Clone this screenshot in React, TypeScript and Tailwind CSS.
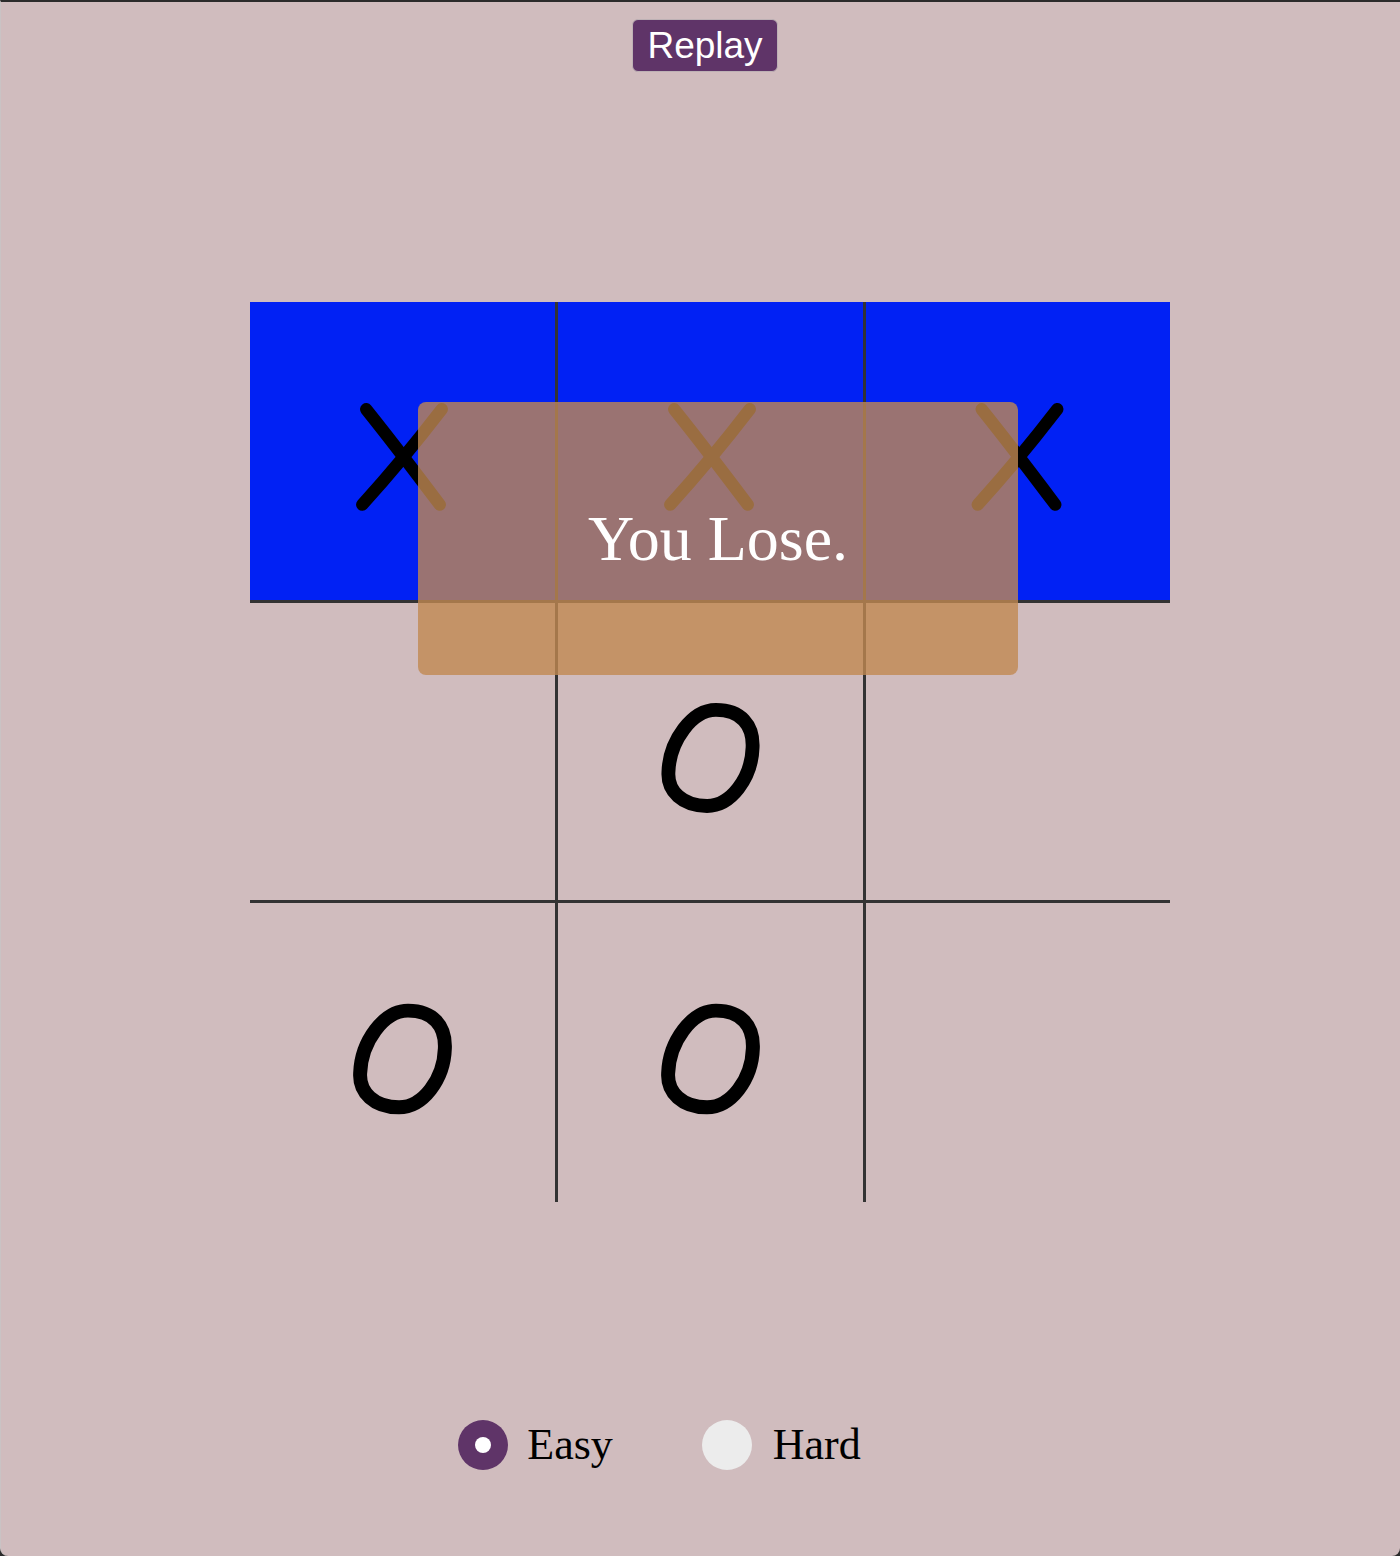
import React from "react";

type Mark = "X" | "O" | null;

const board: Mark[] = ["X", "X", "X", null, "O", null, "O", "O", null];

function XMark() {
  return (
    <svg className="absolute inset-0" width="100%" height="100%" viewBox="0 0 305 300">
      <path d="M 116 108 Q 148 148 190 204" fill="none" stroke="#000" strokeWidth="12.5" strokeLinecap="round" />
      <path d="M 192 108 Q 152 160 112 204" fill="none" stroke="#000" strokeWidth="12.5" strokeLinecap="round" />
    </svg>
  );
}

function OMark() {
  return (
    <svg className="absolute inset-0" width="100%" height="100%" viewBox="0 0 305 300">
      <path
        d="M 158 108 C 183 108, 196 123, 195 146 C 194 177, 173 205, 149 205 C 124 205, 109 190, 110 171 C 111 139, 134 108, 158 108 Z"
        fill="none"
        stroke="#000"
        strokeWidth="14"
      />
    </svg>
  );
}

export default function App() {
  const cellClass = (i: number) => {
    const row = Math.floor(i / 3);
    const col = i % 3;
    return [
      "relative",
      row === 0 ? "bg-[#0121f4]" : "",
      row < 2 ? "border-b-[3px]" : "",
      col < 2 ? "border-r-[3px]" : "",
      "border-[#333333]",
    ].join(" ");
  };

  return (
    <div className="h-[1556px] w-full bg-[#2b2b2b]">
      <div className="flex h-full flex-col rounded-b-[8px] border-t-2 border-l border-[#2b2b2b] bg-[#d0bcbe]" style={{ borderLeftColor: "#c9c3c4" }}>
        {/* replay */}
        <div className="mt-[17px] flex justify-center pl-[9px]">
          <button className="rounded-[6px] border border-[#bdb1b5] bg-[#5f3468] px-[14px] py-[4px] font-['Liberation_Sans',Arial,sans-serif] text-[37px] leading-[43px] text-white">
            Replay
          </button>
        </div>

        {/* board */}
        <div className="mt-[230px] flex justify-center pl-[19px]">
          <div className="relative grid w-[920px] grid-cols-[308px_308px_304px] grid-rows-[301px_300px_299px]">
            {board.map((m, i) => (
              <div key={i} className={cellClass(i)}>
                {m === "X" && <XMark />}
                {m === "O" && <OMark />}
              </div>
            ))}
            <div className="absolute left-[168px] top-[100px] flex h-[273px] w-[600px] items-center justify-center rounded-[8px] bg-[rgba(193,136,81,0.8)]">
              <span className="font-['Liberation_Serif','Times_New_Roman',serif] text-[64px] text-white">You Lose.</span>
            </div>
          </div>
        </div>

        {/* difficulty */}
        <div className="mt-[210px] flex items-center justify-center gap-[89px] pr-[82px] font-['Liberation_Serif','Times_New_Roman',serif] text-[44px] text-black">
          <label className="flex items-center gap-[19px]">
            <span className="flex h-[50px] w-[50px] items-center justify-center rounded-full bg-[#5f3468]">
              <span className="h-[16px] w-[16px] rounded-full bg-white" />
            </span>
            <span>Easy</span>
          </label>
          <label className="flex items-center gap-[21px]">
            <span className="h-[50px] w-[50px] rounded-full bg-[#ececec]" />
            <span>Hard</span>
          </label>
        </div>
      </div>
    </div>
  );
}
